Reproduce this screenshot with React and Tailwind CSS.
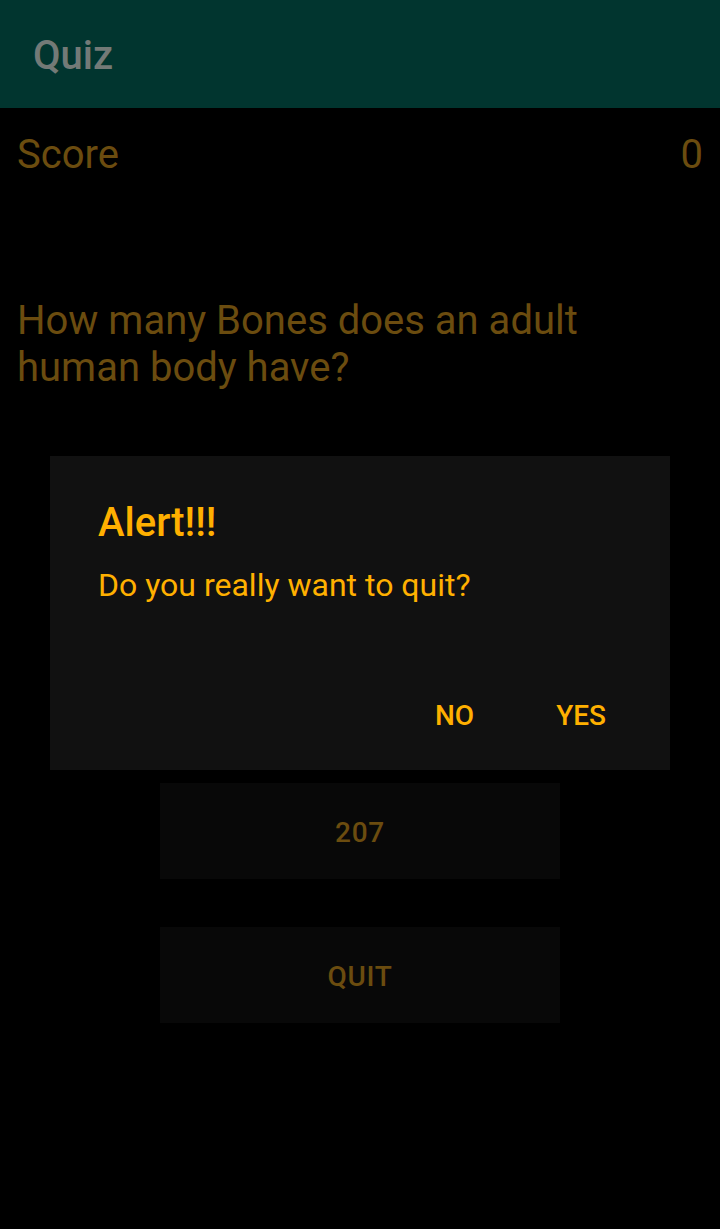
import React from 'react';

const answers = ['206', '208', '207', 'QUIT'];

const App = () => {
    return (
        <div className="relative w-[720px] h-[1229px] bg-black overflow-hidden" style={{ fontFamily: 'Roboto, "Noto Sans", sans-serif' }}>
            {/* App bar */}
            <div className="h-[108px] bg-[#01352f] px-[33px] pt-[32px]">
                <h1 className="text-[40px] leading-[47px] font-medium text-[#737a77]">Quiz</h1>
            </div>

            <div className="px-[17px]">
                {/* Score */}
                <div className="mt-[23px] flex justify-between text-[40px] leading-[47px] text-[#6b4c0f]">
                    <span>Score</span>
                    <span>0</span>
                </div>

                {/* Question */}
                <p className="mt-[119px] text-[40px] leading-[47px] text-[#6b4c0f] pr-[120px]">
                    How many Bones does an adult human body have?
                </p>

                {/* Options, mostly hidden under the dialog */}
                <div className="mt-[104px] flex flex-col items-center gap-[48px]">
                    {answers.map(a => (
                        <button
                            key={a}
                            className="w-[400px] h-[96px] pt-[3px] bg-[#080808] text-[28px] font-medium tracking-wide text-[#6b4c0f]"
                        >
                            {a}
                        </button>
                    ))}
                </div>
            </div>

            {/* Dialog */}
            <div className="absolute left-[50px] top-[456px] w-[620px] h-[314px] bg-[#111111] flex flex-col">
                <h2 className="mt-[43px] px-[48px] text-[40px] leading-[47px] font-medium text-[#ffb000]">Alert!!!</h2>
                <p className="mt-[20px] px-[48px] text-[32px] leading-[38px] text-[#ffb000]">Do you really want to quit?</p>
                <div className="mt-auto mb-[38px] flex justify-end items-center pr-[64px] gap-[82px]">
                    <span className="text-[28px] leading-[33px] font-medium text-[#ffb000]">NO</span>
                    <span className="text-[28px] leading-[33px] font-medium text-[#ffb000]">YES</span>
                </div>
            </div>
        </div>
    );
};

export default App;
